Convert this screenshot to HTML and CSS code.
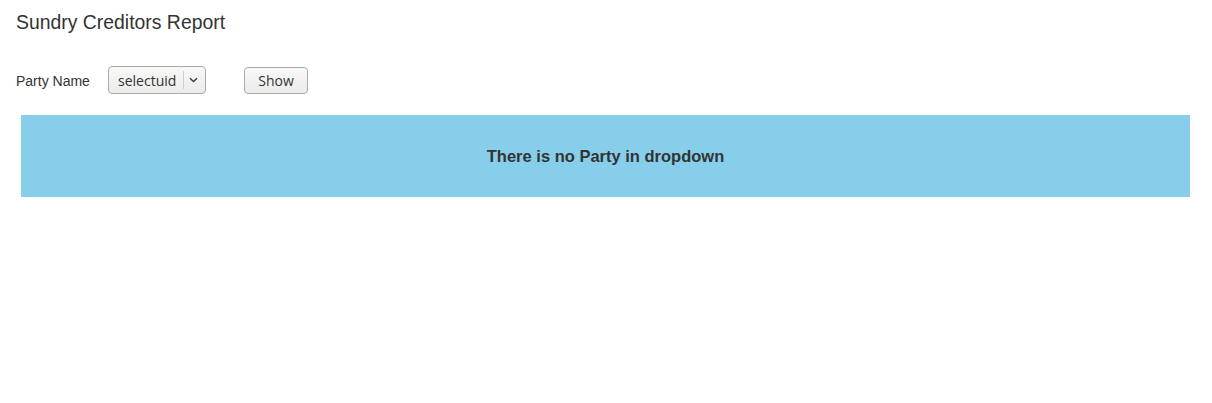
FILE: index.html
```html
<!DOCTYPE html>
<html>
<head>
<meta charset="utf-8">
<link rel="stylesheet" href="styles.css">
</head>
<body>
<div class="page">
  <h1 class="title">Sundry Creditors Report</h1>
  <div class="filter-row">
    <span class="label">Party Name</span>
    <div class="select">
      <span class="select-text">selectuid</span>
      <span class="select-sep"></span>
      <svg class="chev" width="9" height="6" viewBox="0 0 9 6"><path d="M1 1.2 L4.5 4.6 L8 1.2" fill="none" stroke="#3c3c3c" stroke-width="1.4"/></svg>
    </div>
    <button class="btn">Show</button>
  </div>
  <div class="notice">There is no Party in dropdown</div>
</div>
</body>
</html>
```
FILE: styles.css
```css
html, body {
  margin: 0;
  padding: 0;
  background: #fff;
}
.page {
  padding: 0 16px;
  font-family: "Liberation Sans", Arial, sans-serif;
  color: #333;
}
.title {
  margin: 0;
  padding-top: 10px;
  font-size: 19.4px;
  font-weight: normal;
  line-height: 24px;
  color: #333;
}
.filter-row {
  display: flex;
  align-items: center;
  margin-top: 32px;
  height: 28px;
}
.label {
  font-size: 14px;
  color: #333;
  width: 92px;
  padding-top: 2px;
}
.select {
  display: flex;
  align-items: center;
  box-sizing: border-box;
  width: 98px;
  height: 28px;
  border: 1px solid #a9a9a9;
  border-radius: 4px;
  background: linear-gradient(#f8f8f7, #ebebea);
  padding-left: 9px;
  font-family: "Open Sans", "Noto Sans", sans-serif;
  font-size: 14px;
  color: #333;
}
.select-text {
  width: 65px;
}
.select-sep {
  width: 1px;
  height: 18px;
  background: #cfcfcf;
  margin-right: 5px;
}
.chev {
  display: block;
}
.btn {
  margin-left: 38px;
  box-sizing: border-box;
  width: 64px;
  height: 27px;
  border: 1px solid #a9a9a9;
  border-radius: 4px;
  background: linear-gradient(#f8f8f7, #ebebea);
  font-family: "Open Sans", "Noto Sans", sans-serif;
  font-size: 14px;
  color: #333;
  padding: 0;
}
.notice {
  margin: 21px 6px 0 5px;
  height: 82px;
  background: #87ceeb;
  display: flex;
  align-items: center;
  justify-content: center;
  font-size: 16.5px;
  font-weight: bold;
  color: #333;
}
```
